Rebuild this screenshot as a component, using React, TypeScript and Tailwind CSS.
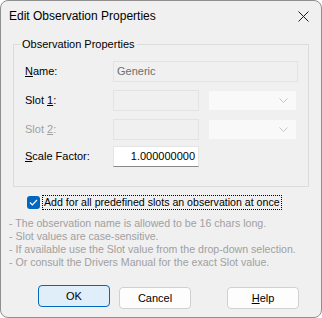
import React from "react";

function Field({ w, white, value, right }: { w: string; white?: boolean; value?: string; right?: boolean }) {
  return (
    <div
      className={`${w} h-[21px] border ${
        white ? "bg-white border-[#e5e5e5] border-b-[#8a8a8a]" : "bg-[#f0f0f0] border-[#e3e3e3]"
      } flex items-center px-[3px] text-[11px] ${right ? "justify-end text-black" : "text-[#6d6d6d]"}`}
    >
      {value}
    </div>
  );
}

function Combo() {
  return (
    <div className="w-[89px] h-[21px] bg-[#f9f9f9] border border-[#f0f0f0] flex items-center justify-end pr-[8px]">
      <svg width="9" height="5" viewBox="0 0 9 5">
        <path d="M0.5 0.5 L4.5 4.5 L8.5 0.5" fill="none" stroke="#c4c4c4" strokeWidth="1" />
      </svg>
    </div>
  );
}

function Btn({ children, primary }: { children: React.ReactNode; primary?: boolean }) {
  return (
    <button
      className={`w-[72px] h-[22px] rounded-[4px] border text-[11px] text-black ${
        primary ? "bg-[#e0eef9] border-[#0067c0]" : "bg-[#fdfdfd] border-[#d0d0d0]"
      }`}
    >
      {children}
    </button>
  );
}

export default function App() {
  return (
    <div
      className="w-[322px] h-[318px] bg-[#f0f0f0] border border-[#8f8f8f] rounded-[8px] overflow-hidden flex flex-col"
      style={{ fontFamily: '"Liberation Sans", Arial, sans-serif' }}
    >
      {/* title bar */}
      <div className="h-[30px] flex items-center justify-between pl-[8px] pr-[12px]">
        <span className="text-[12px] text-black">Edit Observation Properties</span>
        <svg width="11" height="11" viewBox="0 0 11 11">
          <path d="M0.5 0.5 L10.5 10.5 M10.5 0.5 L0.5 10.5" stroke="#1a1a1a" strokeWidth="1" />
        </svg>
      </div>

      <fieldset className="mx-[12px] mt-[6px] h-[150px] border border-[#dcdcdc] pl-[11px] pr-[9px]">
        <legend className="ml-[-5px] px-[2px] text-[11px] text-black leading-[14px]">Observation Properties</legend>
        <div className="flex flex-col text-[11px]">
          <div className="flex items-center mt-[10px]">
            <span className="w-[88px] text-black"><u>N</u>ame:</span>
            <Field w="w-[185px]" value="Generic" />
          </div>
          <div className="flex items-center mt-[8px]">
            <span className="w-[88px] text-black">Slot <u>1</u>:</span>
            <Field w="w-[86px]" />
            <div className="ml-[9px]"><Combo /></div>
          </div>
          <div className="flex items-center mt-[8px]">
            <span className="w-[88px] text-[#a0a0a0]">Slot <u>2</u>:</span>
            <Field w="w-[86px]" />
            <div className="ml-[9px]"><Combo /></div>
          </div>
          <div className="flex items-center mt-[6px]">
            <span className="w-[88px] text-black"><u>S</u>cale Factor:</span>
            <Field w="w-[86px]" white right value="1.000000000" />
          </div>
        </div>
      </fieldset>

      <div className="flex items-center ml-[26px] mt-[8px] text-[10.6px]">
        <div className="w-[13px] h-[13px] rounded-[3px] bg-[#0067c0] flex items-center justify-center">
          <svg width="9" height="7" viewBox="0 0 9 7">
            <path d="M1 3.5 L3.3 5.8 L8 1" fill="none" stroke="white" strokeWidth="1.2" />
          </svg>
        </div>
        <span className="ml-[2px] px-[1px] border border-dotted border-black leading-[13px]">
          Add for all predefined slots an observation at once
        </span>
      </div>

      <div className="ml-[8px] mt-[7px] text-[10.6px] leading-[13px] text-[#a0a0a0]">
        <div>- The observation name is allowed to be 16 chars long.</div>
        <div>- Slot values are case-sensitive.</div>
        <div>- If available use the Slot value from the drop-down selection.</div>
        <div>- Or consult the Drivers Manual for the exact Slot value.</div>
      </div>

      <div className="flex mt-[16px] ml-[37px]">
        <Btn primary>OK</Btn>
        <div className="ml-[9px]"><Btn>Cancel</Btn></div>
        <div className="ml-[36px]"><Btn><u>H</u>elp</Btn></div>
      </div>
    </div>
  );
}
